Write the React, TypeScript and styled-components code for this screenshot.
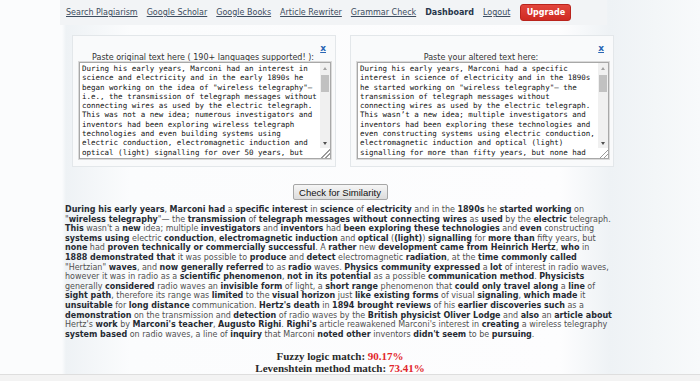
import React from "react";
import styled, { createGlobalStyle } from "styled-components";

const ORIGINAL_TEXT =
  'During his early years, Marconi had an interest in science and electricity and in the early 1890s he began working on the idea of "wireless telegraphy"—i.e., the transmission of telegraph messages without connecting wires as used by the electric telegraph. This was not a new idea; numerous investigators and inventors had been exploring wireless telegraph technologies and even building systems using electric conduction, electromagnetic induction and optical (light) signalling for over 50 years, but none had proven technically or commercially successful. A relatively new development came from Heinrich Hertz, who in 1888 demonstrated that one could produce and detect electromagnetic radiation—at the time generally called "Hertzian" waves, and now generally referred to as radio waves.';

const ALTERED_TEXT =
  'During his early years, Marconi had a specific interest in science of electricity and in the 1890s he started working on "wireless telegraphy"— the transmission of telegraph messages without connecting wires as used by the electric telegraph. This wasn’t a new idea; multiple investigators and inventors had been exploring these technologies and even constructing systems using electric conduction, electromagnetic induction and optical (light) signalling for more than fifty years, but none had proven technically or commercially successful. A rather new development came from Heinrich Hertz, who in 1888 demonstrated that it was possible to produce and detect electromagnetic radiation, at the time commonly called "Hertzian" waves, and now generally referred to as radio waves.';

// one entry per printed line, ** marks the matched words (shown bold)
const RESULT_LINES = [
  '**During his early years**, **Marconi had** a **specific interest** in **science** of **electricity** and in the **1890s** he **started working** on',
  '"**wireless telegraphy**"— the **transmission** of **telegraph messages without connecting wires** as **used** by the **electric** telegraph.',
  "**This** wasn't a **new** idea; multiple **investigators** and **inventors** had **been exploring these technologies** and **even** constructing",
  "**systems using** electric **conduction**, **electromagnetic induction** and **optical** (**(light)**) **signalling** for **more than** fifty years, but",
  "**none** had **proven technically or commercially successful**. A **rather** new **development came from Heinrich Hertz**, **who** in",
  "**1888 demonstrated that** it was possible to **produce** and **detect** electromagnetic **radiation**, at the **time commonly called**",
  '"Hertzian" **waves**, and **now generally referred** to as **radio** waves. **Physics community expressed** a **lot** of interest in radio waves,',
  "however it was in radio as a **scientific phenomenon**, **not in its potential** as a possible **communication method**. **Physicists**",
  "generally **considered** radio waves an **invisible form** of light, a **short range** phenomenon that **could only travel along** a **line** of",
  "**sight path**, therefore its range was **limited** to the **visual horizon** just **like existing forms** of visual **signaling**, **which made** it",
  "**unsuitable** for **long distance** communication. **Hertz's death** in **1894 brought reviews** of his **earlier discoveries such** as a",
  "**demonstration** on the transmission and **detection** of radio waves by the **British physicist Oliver Lodge** and **also** an **article about**",
  "Hertz's **work** by **Marconi's teacher**, **Augusto Righi**. **Righi's** article reawakened Marconi's interest in **creating** a wireless telegraphy",
  "**system based** on radio waves, a line of **inquiry** that Marconi **noted other** inventors **didn't seem** to be **pursuing**.",
];

const NAV_LINKS = [
  { label: "Search Plagiarism" },
  { label: "Google Scholar" },
  { label: "Google Books" },
  { label: "Article Rewriter" },
  { label: "Grammar Check" },
  { label: "Dashboard", active: true },
  { label: "Logout" },
];

const GlobalStyle = createGlobalStyle`
  html, body {
    margin: 0;
    padding: 0;
  }
  body {
    width: 700px;
    height: 381px;
    overflow: hidden;
    font-family: "DejaVu Sans", Verdana, sans-serif;
    background: linear-gradient(
      to right,
      #fbfcfd 0,
      #fbfcfd 62px,
      #eef2f5 66px,
      #fbfcfd 130px,
      #fdfdfe 560px,
      #eef2f5 610px,
      #f8fafb 700px
    );
  }
`;

function TextPanel({ label, text }: { label: string; text: string }) {
  return (
    <Panel>
      <CloseLink>x</CloseLink>
      <PanelLabel>{label}</PanelLabel>
      <TextBox>
        <TextArea defaultValue={text} spellCheck={false} />
        <ScrollBar>
          <ScrollArrow>
            <ArrowUp />
          </ScrollArrow>
          <ScrollTrack>
            <ScrollThumb />
          </ScrollTrack>
          <ScrollArrow>
            <ArrowDown />
          </ScrollArrow>
          <ResizeCorner />
        </ScrollBar>
      </TextBox>
    </Panel>
  );
}

export default function App() {
  return (
    <>
      <GlobalStyle />
      <Page>
        <NavBar>
          {NAV_LINKS.map((link) => (
            <NavLink key={link.label} $active={link.active}>
              {link.label}
            </NavLink>
          ))}
          <UpgradeButton type="button">Upgrade</UpgradeButton>
        </NavBar>

        <PanelRow>
          <TextPanel
            label="Paste original text here ( 190+ languages supported! ):"
            text={ORIGINAL_TEXT}
          />
          <TextPanel label="Paste your altered text here:" text={ALTERED_TEXT} />
        </PanelRow>

        <ButtonRow>
          <CheckButton type="button">Check for Similarity</CheckButton>
        </ButtonRow>

        <ResultText>
          {RESULT_LINES.map((line, n) => (
            <ResultLine key={n}>
              {line
                .split("**")
                .map((piece, i) =>
                  i % 2 === 1 ? <Match key={i}>{piece}</Match> : <span key={i}>{piece}</span>
                )}
            </ResultLine>
          ))}
        </ResultText>

        <Scores>
          <div>
            Fuzzy logic match: <ScoreValue>90.17%</ScoreValue>
          </div>
          <div>
            Levenshtein method match: <ScoreValue>73.41%</ScoreValue>
          </div>
        </Scores>
      </Page>
      <Footer />
    </>
  );
}

const Page = styled.div`
  width: 560px;
  margin-left: 60px;
`;

const NavBar = styled.nav`
  width: 541px;
  height: 25px;
  padding-left: 6px;
  display: flex;
  align-items: center;
  gap: 9px;
  background: #f2f4f6;
`;

const NavLink = styled.a<{ $active?: boolean }>`
  font-size: 8px;
  color: ${({ $active }) => ($active ? "#27364a" : "#3d4d60")};
  font-weight: ${({ $active }) => ($active ? "bold" : "normal")};
  text-decoration: ${({ $active }) => ($active ? "none" : "underline")};
  cursor: pointer;
  white-space: nowrap;
`;

const UpgradeButton = styled.button`
  margin-left: 1px;
  width: 51px;
  height: 17px;
  padding: 0;
  border: 1px solid #b9231c;
  border-radius: 3px;
  background: linear-gradient(#e2463c, #cf2a22);
  color: #fff;
  font-family: "DejaVu Sans", Verdana, sans-serif;
  font-size: 8px;
  font-weight: bold;
  cursor: pointer;
`;

const PanelRow = styled.div`
  display: flex;
  gap: 14px;
  margin: 10px 0 0 12px;
`;

const Panel = styled.div`
  width: 264px;
  box-sizing: border-box;
  padding: 7px 8px 7px 6px;
  border: 1px solid #e3e7ea;
  background: #f9fafb;
  display: flex;
  flex-direction: column;
`;

const CloseLink = styled.a`
  align-self: flex-end;
  margin-right: 1px;
  font-size: 9px;
  line-height: 10px;
  font-weight: bold;
  color: #2a66b4;
  text-decoration: underline;
  cursor: pointer;
`;

const PanelLabel = styled.div`
  text-align: center;
  font-size: 8px;
  line-height: 9px;
  color: #333;
  white-space: nowrap;
`;

const TextBox = styled.div`
  display: flex;
  width: 252px;
  height: 97px;
  box-sizing: border-box;
  border: 1px solid #a8a8a8;
  box-shadow: 0 0 0 1px #dadada;
  background: #fff;
`;

const TextArea = styled.textarea`
  flex: 1;
  min-width: 0;
  height: 100%;
  box-sizing: border-box;
  margin: 0;
  padding: 1px 2px;
  border: none;
  outline: none;
  background: #fff;
  color: #111;
  font-family: "DejaVu Sans Mono", Consolas, monospace;
  font-size: 7.5px;
  line-height: 9.3px;
  resize: none;
  overflow: hidden;
`;

const ScrollBar = styled.div`
  width: 10px;
  display: flex;
  flex-direction: column;
  background: #f0f0f0;
`;

const ScrollArrow = styled.div`
  height: 10px;
  display: flex;
  align-items: center;
  justify-content: center;
`;

const ArrowUp = styled.div`
  width: 0;
  height: 0;
  border-left: 2.5px solid transparent;
  border-right: 2.5px solid transparent;
  border-bottom: 3px solid #a3a3a3;
`;

const ArrowDown = styled(ArrowUp)`
  border-bottom: none;
  border-top: 3px solid #505050;
`;

const ScrollTrack = styled.div`
  flex: 1;
  padding: 2px 1px 0;
`;

const ScrollThumb = styled.div`
  height: 17px;
  background: #c1c1c1;
`;

const ResizeCorner = styled.div`
  height: 10px;
  background: #fff
    linear-gradient(
      135deg,
      transparent 55%,
      #9a9a9a 55%,
      #9a9a9a 62%,
      transparent 62%,
      transparent 75%,
      #9a9a9a 75%,
      #9a9a9a 82%,
      transparent 82%
    );
`;

const ButtonRow = styled.div`
  display: flex;
  justify-content: center;
  margin-top: 17px;
`;

const CheckButton = styled.button`
  width: 95px;
  height: 16px;
  padding: 0;
  border: 1px solid #a6a6a6;
  border-radius: 2px;
  background: linear-gradient(#f6f6f6, #dcdcdc);
  color: #111;
  font-family: "Liberation Sans", Arial, sans-serif;
  font-size: 9.5px;
  cursor: pointer;
`;

const ResultText = styled.div`
  margin: 5px 7px 0 5px;
  font-size: 8px;
  line-height: 9.6px;
  color: #505050;
`;

const ResultLine = styled.div`
  white-space: nowrap;
`;

const Match = styled.b`
  color: #262b33;
`;

const Scores = styled.div`
  margin-top: 12px;
  text-align: center;
  font-family: "Liberation Serif", Georgia, serif;
  font-weight: bold;
  font-size: 11px;
  line-height: 11.5px;
  color: #2a2a2a;
`;

const ScoreValue = styled.span`
  color: #e2262b;
`;

const Footer = styled.div`
  height: 10px;
  border-top: 1px solid #dedede;
  background: #f3f3f3;
`;
